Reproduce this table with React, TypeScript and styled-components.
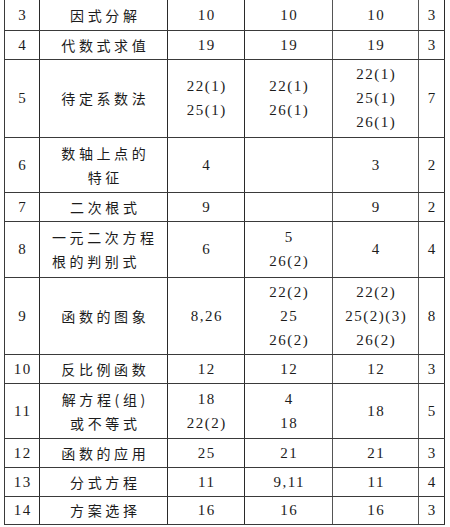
import styled, { createGlobalStyle } from "styled-components";

const GlobalStyle = createGlobalStyle`
  html, body {
    margin: 0;
    padding: 0;
    background: #fff;
  }
`;

interface RowData {
  no: string;
  topic: string[];
  topicLeft?: boolean;
  a: string[];
  b: string[];
  c: string[];
  score: string;
  h: number;
}

const rows: RowData[] = [
  { no: "3", topic: ["因式分解"], a: ["10"], b: ["10"], c: ["10"], score: "3", h: 30 },
  { no: "4", topic: ["代数式求值"], a: ["19"], b: ["19"], c: ["19"], score: "3", h: 29 },
  {
    no: "5",
    topic: ["待定系数法"],
    a: ["22(1)", "25(1)"],
    b: ["22(1)", "26(1)"],
    c: ["22(1)", "25(1)", "26(1)"],
    score: "7",
    h: 78,
  },
  { no: "6", topic: ["数轴上点的", "特征"], a: ["4"], b: [], c: ["3"], score: "2", h: 55 },
  { no: "7", topic: ["二次根式"], a: ["9"], b: [], c: ["9"], score: "2", h: 29 },
  {
    no: "8",
    topic: ["一元二次方程", "根的判别式"],
    topicLeft: true,
    a: ["6"],
    b: ["5", "26(2)"],
    c: ["4"],
    score: "4",
    h: 56,
  },
  {
    no: "9",
    topic: ["函数的图象"],
    a: ["8,26"],
    b: ["22(2)", "25", "26(2)"],
    c: ["22(2)", "25(2)(3)", "26(2)"],
    score: "8",
    h: 77,
  },
  { no: "10", topic: ["反比例函数"], a: ["12"], b: ["12"], c: ["12"], score: "3", h: 29 },
  {
    no: "11",
    topic: ["解方程(组)", "或不等式"],
    a: ["18", "22(2)"],
    b: ["4", "18"],
    c: ["18"],
    score: "5",
    h: 55,
  },
  { no: "12", topic: ["函数的应用"], a: ["25"], b: ["21"], c: ["21"], score: "3", h: 29 },
  { no: "13", topic: ["分式方程"], a: ["11"], b: ["9,11"], c: ["11"], score: "4", h: 29 },
  { no: "14", topic: ["方案选择"], a: ["16"], b: ["16"], c: ["16"], score: "3", h: 28 },
];

const Page = styled.div`
  padding-left: 4px;
`;

const Table = styled.table`
  border-collapse: collapse;
  table-layout: fixed;
  width: 440px;
  color: #1c1c1c;
`;

const Row = styled.tr<{ $h: number }>`
  height: ${({ $h }) => $h}px;

  &:first-child td {
    border-top: none;
  }
`;

const Cell = styled.td<{ $line?: string }>`
  border: 1px solid #3a3a3a;
  border-right-color: ${({ $line }) => $line || "#2a2a2a"};
  padding: 0;
  vertical-align: middle;
  text-align: center;
`;

const NumLine = styled.div`
  font-family: "Liberation Serif", "Noto Sans CJK SC", serif;
  font-size: 15px;
  line-height: 24px;
  letter-spacing: 1.5px;
  padding-left: 1.5px;
  white-space: nowrap;
`;

const TopicLine = styled.div<{ $left?: boolean }>`
  font-family: "Noto Sans CJK SC", "Liberation Serif", sans-serif;
  font-size: 14px;
  line-height: 24px;
  letter-spacing: 3.6px;
  white-space: nowrap;
  text-align: ${({ $left }) => ($left ? "left" : "center")};
  padding-left: ${({ $left }) => ($left ? "12px" : "3.6px")};
`;

const Lines = ({ items }: { items: string[] }) => (
  <>
    {items.map((t, i) => (
      <NumLine key={i}>{t}</NumLine>
    ))}
  </>
);

export default function App() {
  return (
    <Page>
      <GlobalStyle />
      <Table>
        <colgroup>
          <col style={{ width: 35 }} />
          <col style={{ width: 128 }} />
          <col style={{ width: 77 }} />
          <col style={{ width: 88 }} />
          <col style={{ width: 86 }} />
          <col style={{ width: 26 }} />
        </colgroup>
        <tbody>
          {rows.map((r) => (
            <Row key={r.no} $h={r.h}>
              <Cell>
                <NumLine>{r.no}</NumLine>
              </Cell>
              <Cell>
                {r.topic.map((t, i) => (
                  <TopicLine key={i} $left={r.topicLeft}>
                    {t}
                  </TopicLine>
                ))}
              </Cell>
              <Cell>
                <Lines items={r.a} />
              </Cell>
              <Cell $line="#555">
                <Lines items={r.b} />
              </Cell>
              <Cell $line="#555">
                <Lines items={r.c} />
              </Cell>
              <Cell>
                <NumLine>{r.score}</NumLine>
              </Cell>
            </Row>
          ))}
        </tbody>
      </Table>
    </Page>
  );
}
